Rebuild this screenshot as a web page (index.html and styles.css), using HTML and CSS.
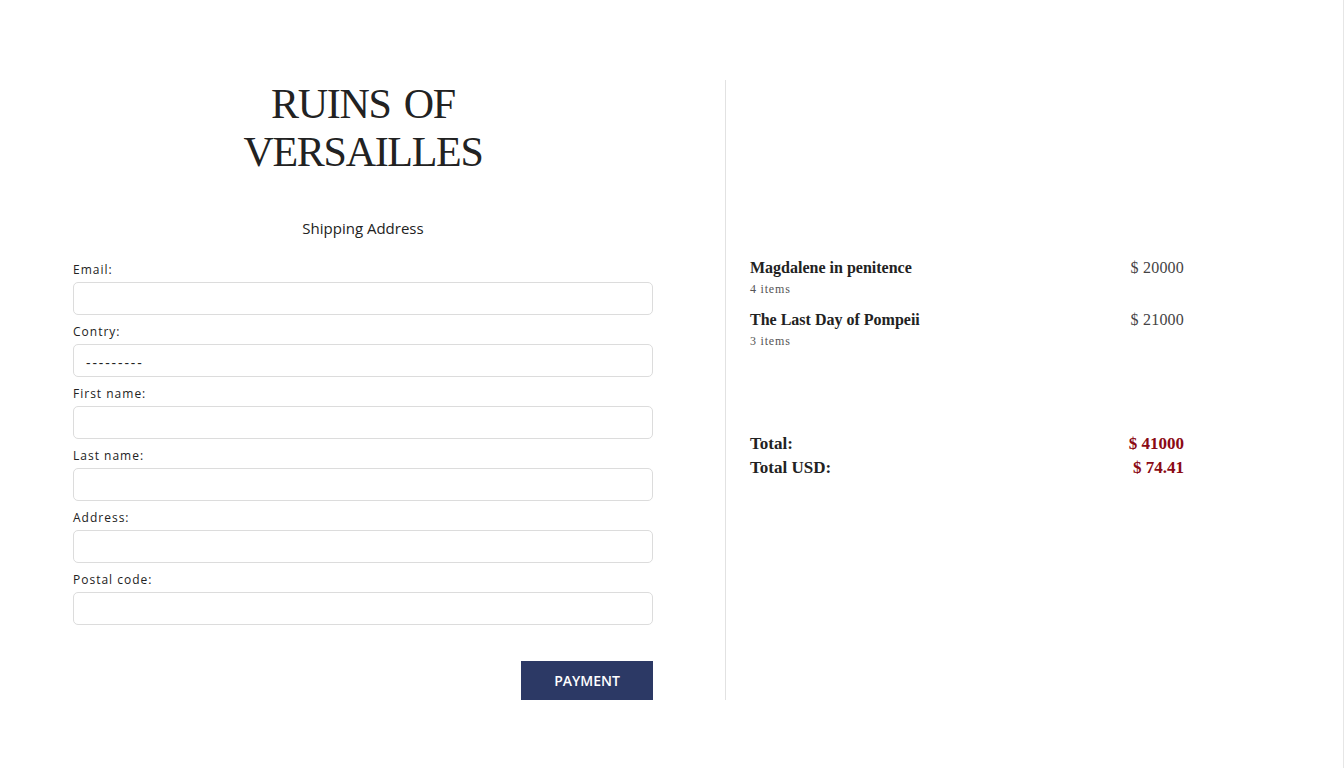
FILE: index.html
```html
<!DOCTYPE html>
<html lang="en">
<head>
<meta charset="utf-8">
<title>Ruins of Versailles — Checkout</title>
<link rel="stylesheet" href="styles.css">
</head>
<body>
<main class="page">
  <section class="left">
    <h1 class="brand">RUINS OF<br>VERSAILLES</h1>
    <h2 class="section-title">Shipping Address</h2>
    <form class="form">
      <label class="field"><span class="label">Email:</span><input class="input" type="text"></label>
      <label class="field"><span class="label">Contry:</span><span class="input select">---------</span></label>
      <label class="field"><span class="label">First name:</span><input class="input" type="text"></label>
      <label class="field"><span class="label">Last name:</span><input class="input" type="text"></label>
      <label class="field"><span class="label">Address:</span><input class="input" type="text"></label>
      <label class="field"><span class="label">Postal code:</span><input class="input" type="text"></label>
      <div class="actions"><button class="btn" type="button">PAYMENT</button></div>
    </form>
  </section>
  <section class="right">
    <ul class="items">
      <li class="item">
        <div class="item-info"><span class="item-name">Magdalene in penitence</span><span class="item-qty">4 items</span></div>
        <span class="item-price">$ 20000</span>
      </li>
      <li class="item">
        <div class="item-info"><span class="item-name">The Last Day of Pompeii</span><span class="item-qty">3 items</span></div>
        <span class="item-price">$ 21000</span>
      </li>
    </ul>
    <div class="totals">
      <div class="total-row"><span>Total:</span><span class="total-val">$ 41000</span></div>
      <div class="total-row"><span>Total USD:</span><span class="total-val">$ 74.41</span></div>
    </div>
  </section>
</main>
</body>
</html>
```
FILE: styles.css
```css
html {
  border-right: 1px solid #e6e6e6;
  min-height: 100%;
}
body {
  margin: 0;
  background: #fff;
  color: #222;
  font-family: "Open Sans", "Liberation Sans", sans-serif;
}
.page {
  display: flex;
  padding: 80px 0 0 73px;
}
.left {
  width: 580px;
  margin-right: 72px;
}
.brand {
  margin: 0;
  padding-top: 0;
  text-align: center;
  font-family: "Liberation Serif", serif;
  font-weight: 400;
  font-size: 42px;
  line-height: 48px;
  letter-spacing: -1.3px;
  word-spacing: 4px;
  color: #222;
}
.section-title {
  margin: 42px 0 0;
  text-align: center;
  font-weight: 400;
  font-size: 15px;
  line-height: 20px;
  color: #222;
}
.form {
  display: flex;
  flex-direction: column;
  margin-top: 23px;
}
.field {
  display: flex;
  flex-direction: column;
  margin-bottom: 8px;
}
.label {
  font-size: 12px;
  letter-spacing: 1px;
  line-height: 18px;
  margin-bottom: 3px;
  color: #222;
}
.input {
  box-sizing: border-box;
  height: 33px;
  border: 1px solid #dcdcdc;
  border-radius: 5px;
  padding: 0 12px;
  font: inherit;
  font-size: 13px;
  background: #fff;
}
.select {
  display: flex;
  align-items: center;
  font-size: 14px;
  letter-spacing: 1.9px;
  padding-top: 3px;
}
.actions {
  display: flex;
  justify-content: flex-end;
  margin-top: 28px;
}
.btn {
  width: 132px;
  height: 39px;
  border: 0;
  background: #2c3965;
  color: #fff;
  font-family: "Open Sans", sans-serif;
  font-weight: 600;
  font-size: 14px;
}
.right {
  border-left: 1px solid #e2e2e2;
  padding-left: 24px;
  width: 434px;
  height: 620px;
  font-family: "Liberation Serif", serif;
}
.items {
  list-style: none;
  margin: 178px 0 0;
  padding: 0;
}
.item {
  display: flex;
  justify-content: space-between;
  align-items: flex-start;
  margin-bottom: 10px;
}
.item-info {
  display: flex;
  flex-direction: column;
}
.item-name {
  font-weight: 700;
  font-size: 16px;
  line-height: 20px;
  color: #222;
}
.item-qty {
  font-size: 12px;
  letter-spacing: 0.8px;
  line-height: 22px;
  color: #555;
}
.item-price {
  font-size: 16px;
  line-height: 20px;
  color: #444;
  letter-spacing: 0.2px;
}
.totals {
  margin-top: 80px;
}
.total-row {
  display: flex;
  justify-content: space-between;
  font-size: 17px;
  font-weight: 700;
  line-height: 24px;
  color: #222;
}
.total-val {
  color: #8b0a14;
}
```
